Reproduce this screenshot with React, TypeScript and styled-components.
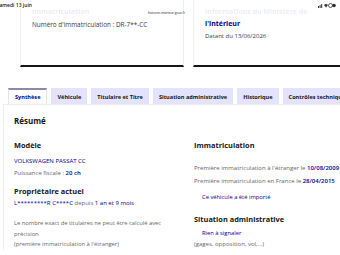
import styled, { createGlobalStyle } from "styled-components";

const GlobalStyle = createGlobalStyle`
  html, body {
    margin: 0;
    padding: 0;
    background: #ffffff;
  }
  body {
    font-family: "Open Sans", "Liberation Sans", sans-serif;
    color: #3a3a3a;
  }
`;

const tabs = [
  "Synthèse",
  "Véhicule",
  "Titulaire et Titre",
  "Situation administrative",
  "Historique",
  "Contrôles techniques",
];

export default function App() {
  return (
    <Screen>
      <GlobalStyle />
      <StatusBar>
        <span className="date">samedi 13 juin</span>
        <span className="url">histovec.interieur.gouv.fr</span>
        <span className="icons">
          <svg width="18" height="5" viewBox="0 0 18 5">
            <rect x="0" y="3" width="1" height="2" fill="#333" />
            <rect x="1.6" y="2" width="1" height="3" fill="#333" />
            <rect x="3.2" y="1" width="1" height="4" fill="#333" />
            <path d="M6 2 Q8 0 10 2 L8 4.5 Z" fill="#333" />
            <circle cx="12.5" cy="2.5" r="2" fill="none" stroke="#333" strokeWidth="0.8" />
            <circle cx="16" cy="2.5" r="1.8" fill="#333" />
          </svg>
        </span>
      </StatusBar>

      <CardsRow>
        <Card $width={164} $left={20}>
          <FadedTitle>Immatriculation</FadedTitle>
          <CardText>Numéro d'immatriculation : DR-7**-CC</CardText>
        </Card>
        <Card $width={170} $left={9}>
          <FadedTitle>Informations du Ministère de</FadedTitle>
          <CardTitle>l'intérieur</CardTitle>
          <CardMeta>Datant du 13/06/2026</CardMeta>
        </Card>
      </CardsRow>

      <TabList>
        {tabs.map((t, i) => (
          <Tab key={t} $active={i === 0}>
            {t}
          </Tab>
        ))}
      </TabList>

      <Panel>
        <PanelTitle>Résumé</PanelTitle>
        <Columns>
          <Column>
            <SectionTitle>Modèle</SectionTitle>
            <Line $mt={6}>
              <Blue>VOLKSWAGEN PASSAT CC</Blue>
            </Line>
            <Line $mt={3}>
              Puissance fiscale : <Blue $bold>20 ch</Blue>
            </Line>
            <SectionTitle $mt={8}>Propriétaire actuel</SectionTitle>
            <Line $mt={2}>
              <Blue>L*********R C****C</Blue> depuis <Blue>1 an et 9 mois</Blue>
            </Line>
            <Paragraph>
              Le nombre exact de titulaires ne peut être calculé avec précision
              <br />
              (première immatriculation à l'étranger)
            </Paragraph>
          </Column>
          <Column>
            <SectionTitle>Immatriculation</SectionTitle>
            <Line $mt={13}>
              Première immatriculation à l'étranger le <Blue $bold>10/08/2009</Blue>
            </Line>
            <Line $mt={4}>
              Première immatriculation en France le <Blue $bold>28/04/2015</Blue>
            </Line>
            <Notice $mt={7}>Ce véhicule a été importé</Notice>
            <SectionTitle $mt={12}>Situation administrative</SectionTitle>
            <Notice $mt={4}>Rien à signaler</Notice>
            <Line $mt={2}>(gages, opposition, vol,...)</Line>
          </Column>
        </Columns>
      </Panel>
    </Screen>
  );
}

const Screen = styled.div`
  position: relative;
  width: 340px;
  height: 255px;
  overflow: hidden;
  background: #ffffff;
`;

const StatusBar = styled.div`
  position: absolute;
  top: 0;
  left: 0;
  right: 0;
  height: 16px;
  font-family: "Open Sans", sans-serif;
  color: #161616;
  z-index: 2;

  .date {
    position: absolute;
    left: -3px;
    top: 2px;
    font-size: 5px;
    font-weight: 600;
  }
  .url {
    position: absolute;
    left: 147px;
    top: 11px;
    font-size: 3.2px;
    background: #fff;
    padding: 0 1px;
  }
  .icons {
    position: absolute;
    right: 4px;
    top: 3px;
    display: flex;
  }
`;

const CardsRow = styled.div`
  display: flex;
  height: 67px;
`;

const Card = styled.div<{ $width: number; $left: number }>`
  flex: none;
  width: ${(p) => p.$width}px;
  margin-left: ${(p) => p.$left}px;
  box-sizing: border-box;
  border-left: 1px solid #f0f0f0;
  border-right: 1px solid #f0f0f0;
  border-bottom: 2px solid #161616;
  padding: 7px 0 0 11px;
  display: flex;
  flex-direction: column;
`;

const FadedTitle = styled.div`
  font-size: 7px;
  font-weight: 700;
  color: #ececfa;
  line-height: 9px;
  filter: blur(0.6px);
`;

const CardText = styled.div`
  margin-top: 4px;
  font-size: 6.4px;
  color: #3a3a3a;
  line-height: 9px;
`;

const CardTitle = styled.div`
  margin-top: 3px;
  font-size: 7px;
  font-weight: 700;
  color: #000091;
  line-height: 9px;
`;

const CardMeta = styled.div`
  margin-top: 4px;
  font-size: 6px;
  color: #3a3a3a;
  line-height: 9px;
`;

const TabList = styled.div`
  display: flex;
  gap: 4px;
  padding-left: 8px;
  margin-top: 21px;
  white-space: nowrap;
`;

const Tab = styled.div<{ $active: boolean }>`
  flex: none;
  height: 16px;
  box-sizing: border-box;
  padding: 0 6px;
  display: flex;
  align-items: center;
  font-size: 5.6px;
  font-weight: 700;
  color: ${(p) => (p.$active ? "#000091" : "#161616")};
  background: ${(p) => (p.$active ? "#ffffff" : "#e3e3fd")};
  border-top: 2px solid ${(p) => (p.$active ? "#8a8aa8" : "transparent")};
  border-left: ${(p) => (p.$active ? "1px solid #e5e5e5" : "none")};
  border-right: ${(p) => (p.$active ? "1px solid #e5e5e5" : "none")};
`;

const Panel = styled.div`
  margin-left: 3px;
  border-left: 1px solid #eeeeee;
  border-top: 1px solid #eeeeee;
  padding: 10px 0 0 10px;
`;

const PanelTitle = styled.div`
  font-size: 8px;
  font-weight: 700;
  color: #161616;
  line-height: 12px;
`;

const Columns = styled.div`
  display: grid;
  grid-template-columns: 180px 1fr;
  margin-top: 13px;
`;

const Column = styled.div`
  display: flex;
  flex-direction: column;
  white-space: nowrap;
`;

const SectionTitle = styled.div<{ $mt?: number }>`
  margin-top: ${(p) => p.$mt ?? 0}px;
  font-size: 7.4px;
  font-weight: 700;
  color: #161616;
  line-height: 11px;
`;

const Line = styled.div<{ $mt: number }>`
  margin-top: ${(p) => p.$mt}px;
  font-size: 6px;
  color: #666666;
  line-height: 9px;
`;

const Blue = styled.span<{ $bold?: boolean }>`
  color: #000091;
  font-weight: ${(p) => (p.$bold ? 600 : 400)};
`;

const Notice = styled.div<{ $mt: number }>`
  margin-top: ${(p) => p.$mt}px;
  padding-left: 8px;
  font-size: 5.8px;
  color: #000091;
  line-height: 9px;
`;

const Paragraph = styled.div`
  margin-top: 10px;
  width: 160px;
  white-space: normal;
  font-size: 5.8px;
  color: #666666;
  line-height: 10.5px;
`;
